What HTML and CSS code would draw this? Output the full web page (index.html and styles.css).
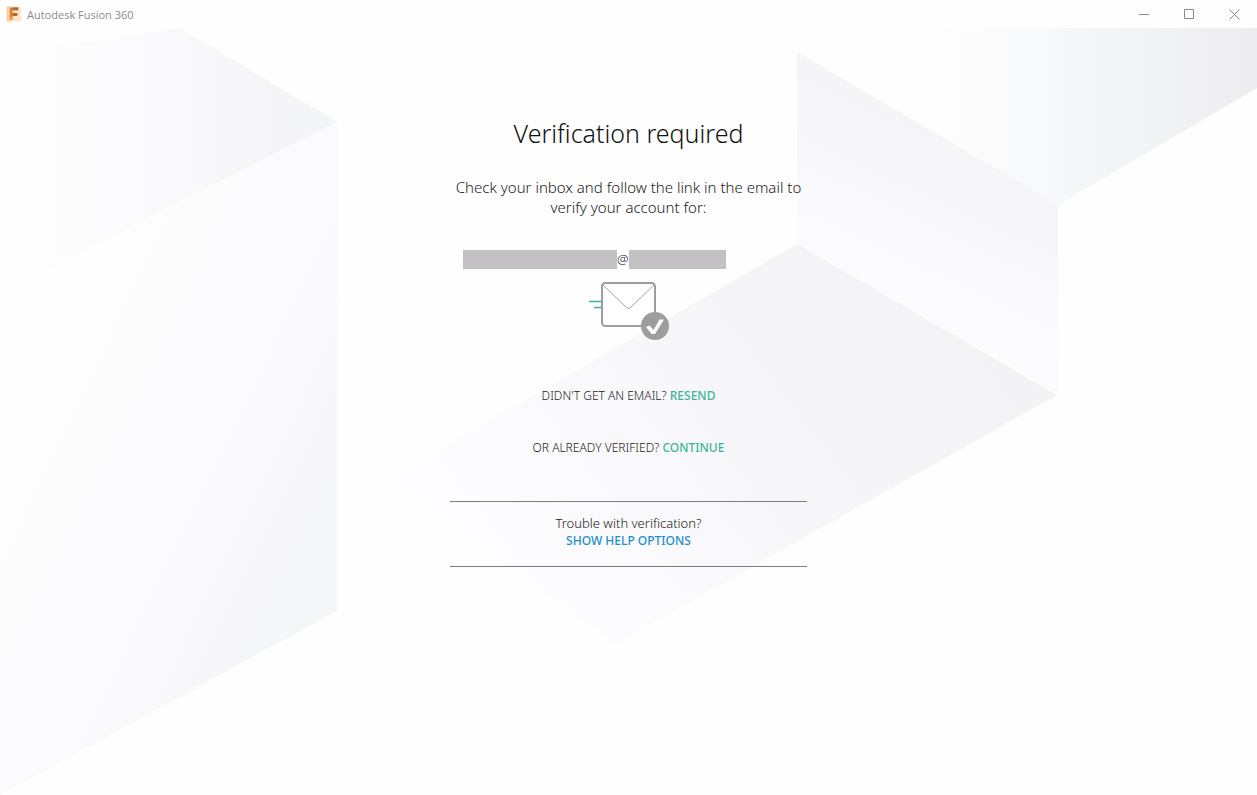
FILE: index.html
```html
<!DOCTYPE html>
<html lang="en">
<head>
  <meta charset="UTF-8">
  <meta name="viewport" content="width=device-width, initial-scale=1.0">
  <title>Autodesk Fusion 360</title>
  <link rel="stylesheet" href="styles.css">
</head>
<body>

  <header class="titlebar">
    <svg class="app-icon" viewBox="0 0 16 16" aria-hidden="true">
      <rect width="16" height="16" rx="1" fill="#fbe3d0"/>
      <path d="M1 0h4v16H1z" fill="#f8cfae"/>
      <path d="M4 1h9v3H7v3h5v3H7v4H4z" fill="#d9822b"/>
      <path d="M7 1h6v3H7zM7 7h5v3H7z" fill="#b06a28"/>
      <path d="M4 12l3-2v4H4z" fill="#f6a545"/>
    </svg>
    <span class="app-name">Autodesk Fusion 360</span>
    <div class="window-controls">
      <button type="button" aria-label="Minimize">
        <svg viewBox="0 0 11 11"><path d="M0 5.5h10"/></svg>
      </button>
      <button type="button" aria-label="Maximize">
        <svg viewBox="0 0 11 11"><path d="M.5 .5h9v9h-9z"/></svg>
      </button>
      <button type="button" aria-label="Close">
        <svg viewBox="0 0 11 11"><path d="M.5 .5l10 10M10.5 .5l-10 10"/></svg>
      </button>
    </div>
  </header>

  <main class="page">
    <svg class="backdrop" viewBox="0 0 1257 767" preserveAspectRatio="none" aria-hidden="true">
      <defs>
        <linearGradient id="leftTop" gradientUnits="userSpaceOnUse" x1="20" y1="0" x2="336" y2="0">
          <stop offset="0" stop-color="#fefefe"/>
          <stop offset=".5" stop-color="#f9f8fb"/>
          <stop offset="1" stop-color="#f3f4f6"/>
        </linearGradient>
        <linearGradient id="leftSide" gradientUnits="userSpaceOnUse" x1="70" y1="270" x2="380" y2="420">
          <stop offset="0" stop-color="#fefefe"/>
          <stop offset=".6" stop-color="#faf9fc"/>
          <stop offset="1" stop-color="#f5f6f8"/>
        </linearGradient>
        <linearGradient id="rightTop" gradientUnits="userSpaceOnUse" x1="930" y1="0" x2="1257" y2="0">
          <stop offset="0" stop-color="#fefefe"/>
          <stop offset=".5" stop-color="#f5f6f8"/>
          <stop offset="1" stop-color="#ededef"/>
        </linearGradient>
        <linearGradient id="rightSide" gradientUnits="userSpaceOnUse" x1="940" y1="90" x2="860" y2="260">
          <stop offset="0" stop-color="#f5f4f7"/>
          <stop offset=".5" stop-color="#f8f8fa"/>
          <stop offset="1" stop-color="#fcfbfd"/>
        </linearGradient>
        <linearGradient id="floor" gradientUnits="userSpaceOnUse" x1="940" y1="270" x2="540" y2="580">
          <stop offset="0" stop-color="#f3f2f5"/>
          <stop offset=".4" stop-color="#f6f6f8"/>
          <stop offset=".75" stop-color="#faf9fb"/>
          <stop offset="1" stop-color="#fdfcfe"/>
        </linearGradient>
      </defs>
      <path d="M48 20L180 0L337 94L70 230L48 240z" fill="url(#leftTop)"/>
      <path d="M337 94V583L0 767V265z" fill="url(#leftSide)"/>
      <path d="M930 0H1257V60L1058 177L930 103z" fill="url(#rightTop)"/>
      <path d="M797 24L1058 177V366L797 216z" fill="url(#rightSide)"/>
      <path d="M797 216L1057 367L615 616L400 456V444z" fill="url(#floor)"/>
    </svg>

    <section class="verify">
      <h1>Verification required</h1>
      <p class="intro">Check your inbox and follow the link in the email to verify your account for:</p>

      <div class="account">
        <span class="redacted redacted-name"></span>
        <span>@</span>
        <span class="redacted redacted-domain"></span>
      </div>

      <svg class="mail-icon" viewBox="0 0 82 60" aria-hidden="true">
        <path d="M1 20.5h12M6 26.5h7" stroke="#3fb3a3" stroke-width="1.4"/>
        <rect x="14" y="2" width="53" height="43" rx="3.5" fill="#fff" stroke="#9d9c9f" stroke-width="2"/>
        <path d="M15 4l24 23q1.500 1 3 0L66 4" fill="none" stroke="#a3a2a5" stroke-width="1"/>
        <circle cx="67" cy="45" r="14" fill="#9d9c9f"/>
        <path d="M58 46l3.500-1.500 4 4.500 6-10.500h4.500L67 53h-3.500z" fill="#fff"/>
      </svg>

      <p class="action">DIDN'T GET AN EMAIL? <button type="button">RESEND</button></p>
      <p class="action">OR ALREADY VERIFIED? <button type="button">CONTINUE</button></p>

      <div class="help">
        <p>Trouble with verification?</p>
        <button type="button">SHOW HELP OPTIONS</button>
      </div>
    </section>
  </main>

</body>
</html>
```
FILE: styles.css
```css
* {
  box-sizing: border-box;
}

body {
  margin: 0;
  min-height: 100vh;
  display: flex;
  flex-direction: column;
  background: #fefefe;
  color: #222;
  font-family: "Noto Sans", "Open Sans", sans-serif;
  font-weight: 300;
}

h1, p {
  margin: 0;
}

button {
  padding: 0;
  border: none;
  background: none;
  font: inherit;
  cursor: pointer;
}

.titlebar {
  display: flex;
  align-items: center;
  height: 28px;
  padding-left: 6px;
  gap: 6px;
}

.app-icon {
  width: 15px;
  height: 16px;
}

.app-name {
  color: #8b8b8e;
  font-family: "Open Sans", sans-serif;
  font-size: 11px;
  font-weight: 400;
}

.window-controls {
  display: flex;
  margin-left: auto;
}

.window-controls button {
  display: flex;
  align-items: center;
  justify-content: center;
  width: 45px;
  height: 26px;
}

.window-controls svg {
  width: 11px;
  height: 11px;
  fill: none;
  stroke: #88878b;
  stroke-width: 1;
}

.page {
  position: relative;
  flex: 1;
  padding: 87px 20px 40px;
}

.backdrop {
  position: absolute;
  inset: 0;
  width: 100%;
  height: 100%;
}

.verify {
  position: relative;
  max-width: 357px;
  margin: 0 auto;
  text-align: center;
}

h1 {
  color: #111;
  font-size: 25px;
  line-height: 36px;
  font-weight: 300;
}

.intro {
  margin-top: 26px;
  font-size: 15px;
  line-height: 20px;
}

.account {
  display: flex;
  align-items: center;
  height: 20px;
  margin-top: 32px;
  padding-left: 13px;
  font-size: 13px;
}

.redacted {
  height: 19px;
  background: #c3c1c4;
}

.redacted-name {
  width: 154px;
}

.redacted-domain {
  width: 97px;
}

.mail-icon {
  display: block;
  width: 82px;
  height: 60px;
  margin: 12px auto 45px;
}

.action {
  margin-bottom: 32px;
  font-size: 12px;
  line-height: 20px;
}

.action button {
  color: #3db698;
  font-weight: 500;
}

.help {
  margin-top: 43px;
  padding: 13px 0 17px;
  border-top: 1px solid #7d7c82;
  border-bottom: 1px solid #7d7c82;
  font-size: 13px;
  line-height: 17px;
}

.help button {
  display: block;
  margin: 0 auto;
  color: #1e8fcc;
  font-size: 12px;
  font-weight: 500;
}
```
